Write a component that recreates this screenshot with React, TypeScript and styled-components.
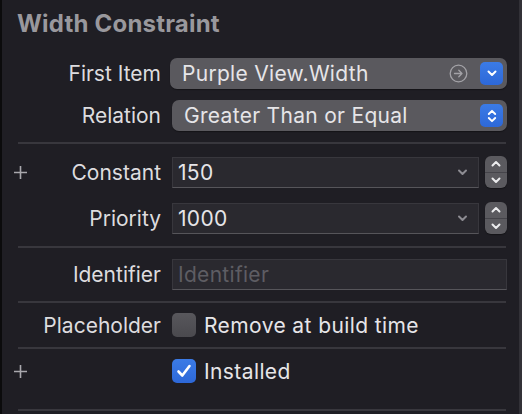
import React from "react"
import styled, { createGlobalStyle } from "styled-components"

const GlobalStyle = createGlobalStyle`
html, body {
    margin: 0;
    padding: 0;
    background: #1f1e24;
}
body {
    font-family: Inter, "Noto Sans", "Liberation Sans", sans-serif;
    -webkit-font-smoothing: antialiased;
}
`

const Panel = styled.div`
width: 522px;
height: 414px;
box-sizing: border-box;
background: #1f1e24;
border-left: 2px solid #0b0b0c;
border-right: 3px solid #323137;
overflow: hidden;
display: flex;
flex-direction: column;
`

const Title = styled.h2`
margin: 0;
padding: 9px 0 0 15px;
height: 44px;
box-sizing: border-box;
font-size: 24px;
line-height: 30px;
letter-spacing: 0.2px;
font-weight: 700;
color: #99989d;
`

const Section = styled.div<{ $top: number; $bottom: number; $gap?: number }>`
display: flex;
flex-direction: column;
padding-top: ${p => p.$top}px;
padding-bottom: ${p => p.$bottom}px;
gap: ${p => p.$gap ?? 0}px;
`

const Separator = styled.div`
height: 2px;
margin: 0 13px 0 16px;
background: #38373d;
`

const Row = styled.div<{ $h?: number }>`
display: flex;
align-items: center;
height: ${p => p.$h ?? 31}px;
padding-right: 12px;
`

const PlusCell = styled.div`
flex: none;
width: 36px;
display: flex;
justify-content: center;
align-items: center;
`

const Label = styled.div`
flex: none;
width: 123px;
margin-right: 11px;
text-align: right;
font-size: 21px;
color: #dddcdf;
white-space: nowrap;
`

const Control = styled.div`
flex: 1;
min-width: 0;
`

const Popup = styled.div<{ $shift?: number }>`
height: 31px;
margin-left: ${p => -(p.$shift ?? 0)}px;
box-sizing: border-box;
border-radius: 7px;
background: #5a595e;
box-shadow: 0 1px 1px rgba(0, 0, 0, 0.35);
display: flex;
align-items: center;
padding: 0 4px 0 12px;
font-size: 21px;
letter-spacing: 0.3px;
color: #e6e5e8;
`

const PopupText = styled.span`
flex: 1;
white-space: nowrap;
`

const BlueButton = styled.div`
width: 23px;
height: 23px;
border-radius: 5px;
background: linear-gradient(#3b7be6, #2d68d8);
display: flex;
align-items: center;
justify-content: center;
`

const LinkIcon = styled.div`
margin-right: 12px;
display: flex;
`

const ComboWrap = styled.div`
display: flex;
align-items: center;
gap: 6px;
`

const Field = styled.div<{ $placeholder?: boolean }>`
flex: 1;
height: 31px;
box-sizing: border-box;
background: #2a292f;
border: 1px solid #38373d;
border-bottom-color: #56555a;
display: flex;
align-items: center;
padding: 0 10px 0 5px;
font-size: 21px;
letter-spacing: 0.3px;
color: ${p => (p.$placeholder ? "#5e5d63" : "#e6e5e8")};
`

const FieldText = styled.span`
flex: 1;
`

const Stepper = styled.div`
flex: none;
width: 22px;
height: 32px;
border-radius: 6px;
background: #5b5a5f;
box-shadow: 0 1px 1px rgba(0, 0, 0, 0.35);
display: flex;
flex-direction: column;
`

const StepHalf = styled.div<{ $top?: boolean }>`
flex: 1;
display: flex;
align-items: center;
justify-content: center;
border-bottom: ${p => (p.$top ? "1px solid #45444a" : "none")};
`

const CheckRow = styled.div`
display: flex;
align-items: center;
gap: 8px;
font-size: 21px;
letter-spacing: 0.4px;
color: #e6e5e8;
white-space: nowrap;
`

const Box = styled.div<{ $checked?: boolean }>`
width: 24px;
height: 24px;
box-sizing: border-box;
border-radius: 5px;
background: ${p => (p.$checked ? "linear-gradient(#3b7be6, #2d68d8)" : "linear-gradient(#58575c, #4a494e)")};
display: flex;
align-items: center;
justify-content: center;
`

const Plus = () => (
    <svg width="15" height="15" viewBox="0 0 15 15">
        <path d="M7.5 1v13M1 7.5h13" stroke="#a9a8ad" strokeWidth="1.6" />
    </svg>
)

const ChevronDown = ({ color = "#fff", w = 10 }: { color?: string; w?: number }) => (
    <svg width={w} height="7" viewBox="0 0 10 7">
        <path d="M1.5 1.5l3.5 3.5 3.5-3.5" fill="none" stroke={color} strokeWidth="2" strokeLinecap="round" strokeLinejoin="round" />
    </svg>
)

const ChevronUp = ({ color = "#fff" }: { color?: string }) => (
    <svg width="10" height="7" viewBox="0 0 10 7">
        <path d="M1.5 5.5l3.5-3.5 3.5 3.5" fill="none" stroke={color} strokeWidth="2" strokeLinecap="round" strokeLinejoin="round" />
    </svg>
)

const UpDown = () => (
    <svg width="10" height="16" viewBox="0 0 10 16">
        <path d="M1.8 6l3.2-3.2 3.2 3.2M1.8 10l3.2 3.2 3.2-3.2" fill="none" stroke="#fff" strokeWidth="1.9" strokeLinecap="round" strokeLinejoin="round" />
    </svg>
)

const CircleArrow = () => (
    <svg width="19" height="19" viewBox="0 0 19 19">
        <circle cx="9.5" cy="9.5" r="8.3" fill="none" stroke="#a3a2a7" strokeWidth="1.3" />
        <path d="M5.5 9.5h7.5M9.8 6.3l3.2 3.2-3.2 3.2" fill="none" stroke="#a3a2a7" strokeWidth="1.3" strokeLinecap="round" strokeLinejoin="round" />
    </svg>
)

const Check = () => (
    <svg width="16" height="14" viewBox="0 0 16 14">
        <path d="M2.5 7.5l3.8 4 7.2-9.5" fill="none" stroke="#fff" strokeWidth="2.6" strokeLinecap="round" strokeLinejoin="round" />
    </svg>
)

const Combo: React.FC<{ value: string }> = ({ value }) => (
    <ComboWrap>
        <Field>
            <FieldText>{value}</FieldText>
            <ChevronDown color="#8d8c92" w={11} />
        </Field>
        <Stepper>
            <StepHalf $top>
                <ChevronUp color="#ececee" />
            </StepHalf>
            <StepHalf>
                <ChevronDown color="#ececee" />
            </StepHalf>
        </Stepper>
    </ComboWrap>
)

export default function App() {
    return (
        <>
            <GlobalStyle />
            <Panel>
                <Title>Width Constraint</Title>
                <Section $top={14} $bottom={11} $gap={11}>
                    <Row>
                        <PlusCell />
                        <Label>First Item</Label>
                        <Control>
                            <Popup $shift={2}>
                                <PopupText>Purple View.Width</PopupText>
                                <LinkIcon>
                                    <CircleArrow />
                                </LinkIcon>
                                <BlueButton>
                                    <ChevronDown />
                                </BlueButton>
                            </Popup>
                        </Control>
                    </Row>
                    <Row>
                        <PlusCell />
                        <Label>Relation</Label>
                        <Control>
                            <Popup>
                                <PopupText>Greater Than or Equal</PopupText>
                                <BlueButton>
                                    <UpDown />
                                </BlueButton>
                            </Popup>
                        </Control>
                    </Row>
                </Section>
                <Separator />
                <Section $top={12} $bottom={12} $gap={14}>
                    <Row $h={32}>
                        <PlusCell>
                            <Plus />
                        </PlusCell>
                        <Label>Constant</Label>
                        <Control>
                            <Combo value="150" />
                        </Control>
                    </Row>
                    <Row $h={32}>
                        <PlusCell />
                        <Label>Priority</Label>
                        <Control>
                            <Combo value="1000" />
                        </Control>
                    </Row>
                </Section>
                <Separator />
                <Section $top={11} $bottom={11}>
                    <Row>
                        <PlusCell />
                        <Label>Identifier</Label>
                        <Control>
                            <Field $placeholder>Identifier</Field>
                        </Control>
                    </Row>
                </Section>
                <Separator />
                <Section $top={10} $bottom={10}>
                    <Row $h={24}>
                        <PlusCell />
                        <Label>Placeholder</Label>
                        <Control>
                            <CheckRow>
                                <Box />
                                Remove at build time
                            </CheckRow>
                        </Control>
                    </Row>
                </Section>
                <Separator />
                <Section $top={10} $bottom={26}>
                    <Row $h={24}>
                        <PlusCell>
                            <Plus />
                        </PlusCell>
                        <Label />
                        <Control>
                            <CheckRow>
                                <Box $checked>
                                    <Check />
                                </Box>
                                Installed
                            </CheckRow>
                        </Control>
                    </Row>
                </Section>
                <Separator />
            </Panel>
        </>
    )
}
